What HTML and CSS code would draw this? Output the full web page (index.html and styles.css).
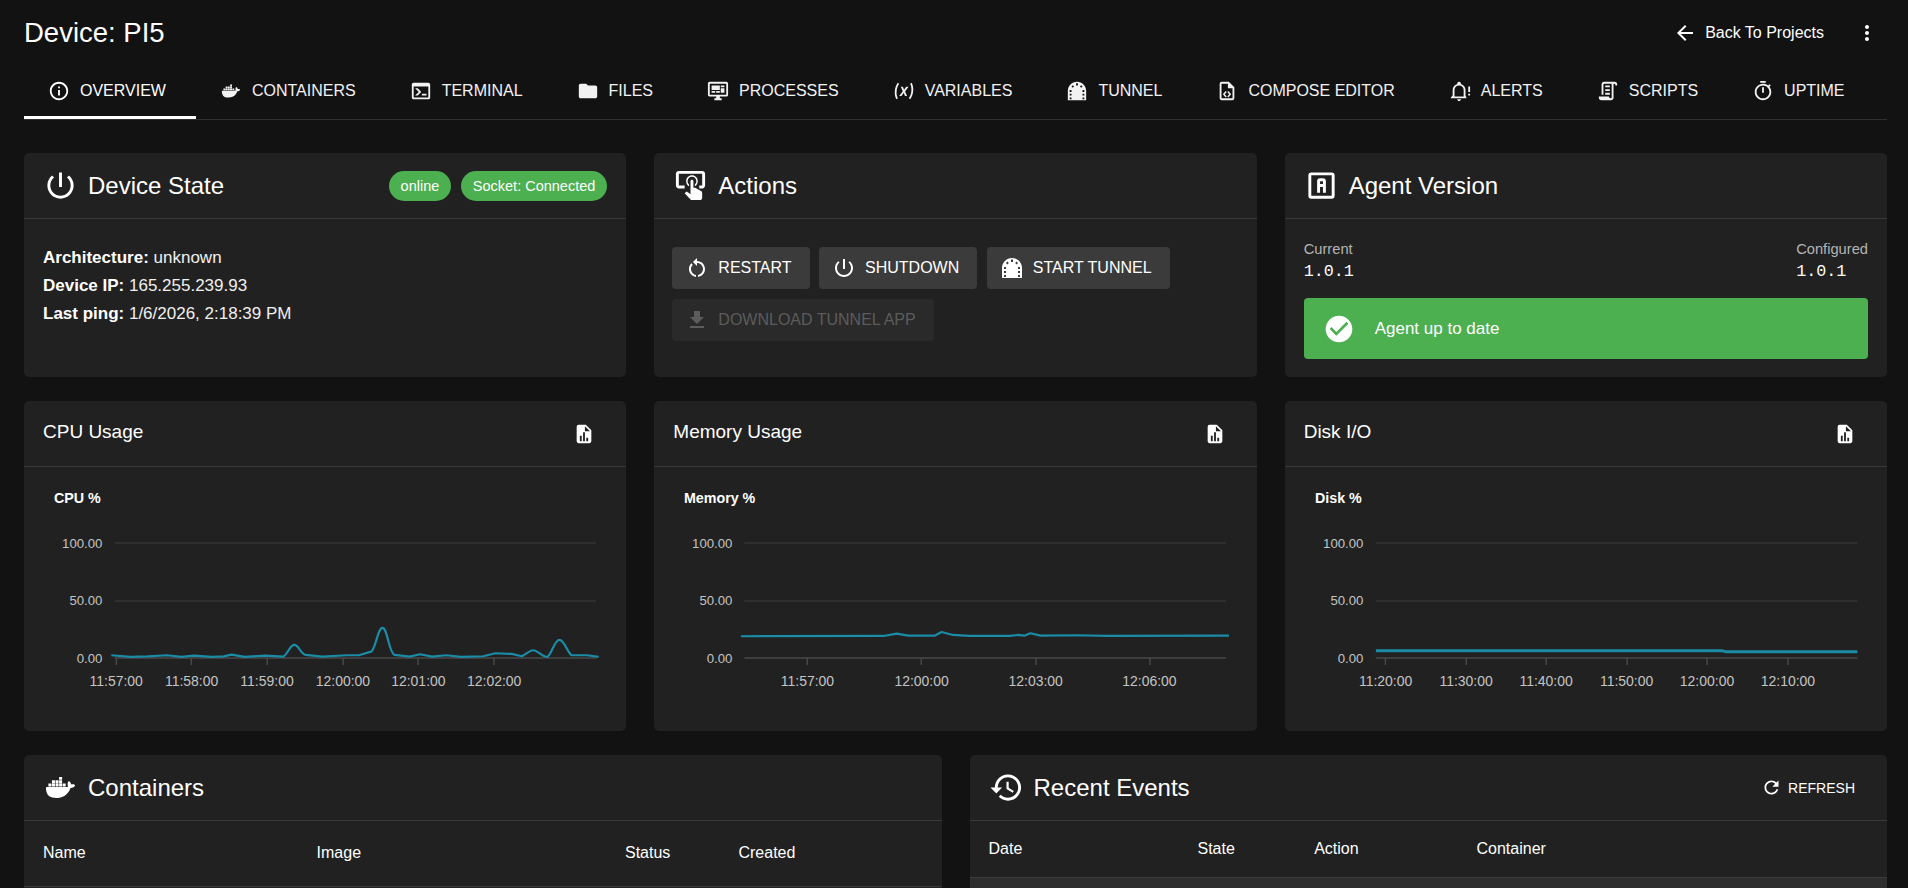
FILE: index.html
```html
<!DOCTYPE html>
<html lang="en">

<head>
    <meta charset="UTF-8">
    <title>Device: PI5</title>
    <link rel="stylesheet" href="styles.css">
</head>

<body>
    <svg class="icon-defs" xmlns="http://www.w3.org/2000/svg">
        <symbol id="i-info" viewBox="0 0 24 24"><path d="M11 7h2v2h-2zm0 4h2v6h-2zm1-9C6.48 2 2 6.48 2 12s4.48 10 10 10 10-4.48 10-10S17.52 2 12 2zm0 18c-4.41 0-8-3.59-8-8s3.59-8 8-8 8 3.59 8 8-3.59 8-8 8z"/></symbol>
        <symbol id="i-docker" viewBox="0 0 24 24"><path d="M21.81 10.25c-.06-.04-.56-.43-1.64-.43-.28 0-.56.03-.84.08-.21-1.4-1.38-2.11-1.43-2.14l-.29-.17-.18.27c-.24.36-.43.77-.51 1.19-.2.8-.08 1.56.33 2.21-.49.28-1.29.35-1.46.35H2.62c-.34 0-.62.28-.62.63 0 1.15.18 2.3.58 3.38.45 1.19 1.13 2.07 2 2.61.98.6 2.59.94 4.42.94.79 0 1.61-.07 2.42-.22 1.12-.2 2.2-.59 3.19-1.16A8.3 8.3 0 0016.76 16c1.05-1.17 1.67-2.5 2.12-3.65h.19c1.14 0 1.85-.46 2.24-.85.26-.24.45-.53.59-.87l.08-.24-.17-.14m-17.96.99h1.76c.08 0 .16-.07.16-.16V9.5c0-.08-.07-.16-.16-.16H3.85c-.09 0-.16.07-.16.16v1.58c.01.09.07.16.16.16m2.43 0h1.76c.08 0 .16-.07.16-.16V9.5c0-.08-.07-.16-.16-.16H6.28c-.09 0-.16.07-.16.16v1.58c.01.09.07.16.16.16m2.47 0h1.75c.1 0 .17-.07.17-.16V9.5c0-.08-.06-.16-.17-.16H8.75c-.08 0-.15.07-.15.16v1.58c0 .09.06.16.15.16m2.44 0h1.77c.08 0 .15-.07.15-.16V9.5c0-.08-.06-.16-.15-.16h-1.77c-.08 0-.15.07-.15.16v1.58c0 .09.07.16.15.16M6.28 9h1.76c.08 0 .16-.09.16-.18V7.25c0-.09-.07-.16-.16-.16H6.28c-.09 0-.16.06-.16.16v1.57c.01.09.07.18.16.18m2.47 0h1.75c.1 0 .17-.09.17-.18V7.25c0-.09-.06-.16-.17-.16H8.75c-.08 0-.15.06-.15.16v1.57c0 .09.06.18.15.18m2.44 0h1.77c.08 0 .15-.09.15-.18V7.25c0-.09-.07-.16-.15-.16h-1.77c-.08 0-.15.06-.15.16v1.57c0 .09.07.18.15.18m0-2.28h1.77c.08 0 .15-.07.15-.16V5c0-.1-.07-.17-.15-.17h-1.77c-.08 0-.15.06-.15.17v1.56c0 .08.07.16.15.16m2.46 4.52h1.76c.09 0 .16-.07.16-.16V9.5c0-.08-.07-.16-.16-.16h-1.76c-.08 0-.15.07-.15.16v1.58c0 .09.07.16.15.16"/></symbol>
        <symbol id="i-terminal" viewBox="0 0 24 24"><path d="M20,19V7H4V19H20M20,3A2,2 0 0,1 22,5V19A2,2 0 0,1 20,21H4A2,2 0 0,1 2,19V5C2,3.89 2.9,3 4,3H20M13,17V15H18V17H13M9.58,13L5.57,9H8.4L11.7,12.3C12.09,12.69 12.09,13.33 11.7,13.72L8.42,17H5.59L9.58,13Z"/></symbol>
        <symbol id="i-folder" viewBox="0 0 24 24"><path d="M10 4H4c-1.1 0-1.99.9-1.99 2L2 18c0 1.1.9 2 2 2h16c1.1 0 2-.9 2-2V8c0-1.1-.9-2-2-2h-8l-2-2z"/></symbol>
        <symbol id="i-monitor" viewBox="0 0 24 24"><path d="M21,16V4H3V16H21M21,2A2,2 0 0,1 23,4V16A2,2 0 0,1 21,18H14V20H16V22H8V20H10V18H3C1.89,18 1,17.1 1,16V4C1,2.89 1.89,2 3,2H21M5,6H14V11H5V6M15,6H19V8H15V6M19,9V14H15V9H19M5,12H9V14H5V12M10,12H14V14H10V12Z"/></symbol>
        <symbol id="i-variable" viewBox="0 0 24 24"><path d="M20.41,3C21.8,5.71 22.35,8.84 22,12C21.8,15.16 20.7,18.29 18.83,21L17.3,20C18.91,17.57 19.85,14.8 20,12C20.34,9.2 19.89,6.43 18.7,4L20.41,3M5.17,3L6.7,4C5.09,6.43 4.15,9.2 4,12C3.66,14.8 4.12,17.57 5.3,20L3.61,21C2.21,18.29 1.65,15.17 2,12C2.2,8.84 3.3,5.71 5.17,3M12.08,10.68L14.4,7.45H16.93L13.15,12.45L15.35,17.37H13.09L11.71,14L9.28,17.33H6.76L10.66,12.21L8.53,7.45H10.8L12.08,10.68Z"/></symbol>
        <symbol id="i-tunnel" viewBox="0 0 24 24"><path fill-rule="evenodd" d="M12 2C6.5 2 2 6.5 2 12v10h20V12C22 6.5 17.5 2 12 2zM4 11h2v2H4zM4 15h2v2H4zM4 19h2v2H4zM18 11h2v2h-2zM18 15h2v2h-2zM18 19h2v2h-2zM7.4 5.6l1.4 1.4-1.4 1.4L6 7zM16.6 5.6L18 7l-1.4 1.4L15.200 7zM11 3.500h2V6h-2z"/></symbol>
        <symbol id="i-file-code" viewBox="0 0 24 24"><path d="M14 2H6a2 2 0 00-2 2v16a2 2 0 002 2h12a2 2 0 002-2V8l-6-6zm4 18H6V4h7v5h5v11zM10.500 12l-3 3.500 3 3.500 1.200-1-2.100-2.500 2.100-2.500zm3 0l-1.200 1 2.100 2.500-2.100 2.500 1.200 1 3-3.500z"/></symbol>
        <symbol id="i-bell" viewBox="0 0 24 24"><path d="M9 21h4c0 1.100-.9 2-2 2s-2-.9-2-2zM19 19v1H2v-1l2-2v-6c0-3.100 2-5.800 5-6.700V4c0-1.100.9-2 2-2s2 .9 2 2v.3c3 .9 5 3.600 5 6.700v6l1 2zM16 11c0-2.800-2.200-5-5-5s-5 2.200-5 5v7h10v-7zM21 7h2v6h-2zM21 15h2v2h-2z"/></symbol>
        <symbol id="i-script" viewBox="0 0 24 24"><path d="M15,20A1,1 0 0,0 16,19V4H8A1,1 0 0,0 7,5V16H5V5A3,3 0 0,1 8,2H19A3,3 0 0,1 22,5V6H20V5A1,1 0 0,0 19,4A1,1 0 0,0 18,5V9L18,19A3,3 0 0,1 15,22H5A3,3 0 0,1 2,19V18H13A2,2 0 0,0 15,20M9,6H14V8H9V6M9,10H14V12H9V10M9,14H14V16H9V14Z"/></symbol>
        <symbol id="i-timer" viewBox="0 0 24 24"><path d="M15 1H9v2h6V1zm-4 13h2V8h-2v6zm8.030-6.610l1.420-1.420c-.43-.51-.9-.99-1.410-1.410l-1.420 1.420C16.070 4.740 14.120 4 12 4c-4.970 0-9 4.030-9 9s4.020 9 9 9 9-4.030 9-9c0-2.120-.74-4.070-1.970-5.610zM12 20c-3.870 0-7-3.130-7-7s3.130-7 7-7 7 3.130 7 7-3.130 7-7 7z"/></symbol>
        <symbol id="i-back" viewBox="0 0 24 24"><path d="M20 11H7.830l5.590-5.590L12 4l-8 8 8 8 1.410-1.410L7.830 13H20v-2z"/></symbol>
        <symbol id="i-more" viewBox="0 0 24 24"><path d="M12 8c1.100 0 2-.9 2-2s-.9-2-2-2-2 .9-2 2 .9 2 2 2zm0 2c-1.100 0-2 .9-2 2s.9 2 2 2 2-.9 2-2-.9-2-2-2zm0 6c-1.100 0-2 .9-2 2s.9 2 2 2 2-.9 2-2-.9-2-2-2z"/></symbol>
        <symbol id="i-power" viewBox="0 0 24 24"><path d="M13 3h-2v10h2V3zm4.830 2.170l-1.420 1.420C17.990 7.860 19 9.810 19 12c0 3.870-3.130 7-7 7s-7-3.130-7-7c0-2.190 1.010-4.140 2.580-5.420L6.170 5.170C4.230 6.820 3 9.260 3 12c0 4.970 4.030 9 9 9s9-4.030 9-9c0-2.740-1.230-5.180-3.170-6.830z"/></symbol>
        <symbol id="i-tap" viewBox="0 0 24 24"><path d="M13 5C15.210 5 17 6.790 17 9C17 10.500 16.200 11.770 15 12.460V11.240C15.610 10.690 16 9.890 16 9C16 7.340 14.660 6 13 6S10 7.340 10 9C10 9.890 10.390 10.690 11 11.240V12.460C9.800 11.770 9 10.500 9 9C9 6.790 10.790 5 13 5M20 20.500C19.970 21.320 19.320 21.970 18.500 22H13C12.620 22 12.260 21.850 12 21.570L8 17.370L8.740 16.600C8.930 16.390 9.200 16.280 9.500 16.280H9.700L12 18V9C12 8.450 12.450 8 13 8S14 8.450 14 9V13.470L15.210 13.600L19.150 15.790C19.680 16.030 20 16.560 20 17.140V20.500M20 2H4C2.900 2 2 2.900 2 4V12C2 13.110 2.900 14 4 14H8V12L4 12L4 4H20L20 12H18V14H20V13.960L20.040 14C21.130 14 22 13.090 22 12V4C22 2.900 21.110 2 20 2Z"/></symbol>
        <symbol id="i-alpha" viewBox="0 0 24 24"><path d="M11,7A2,2 0 0,0 9,9V17H11V13H13V17H15V9A2,2 0 0,0 13,7H11M11,9H13V11H11V9M5,3H19A2,2 0 0,1 21,5V19A2,2 0 0,1 19,21H5A2,2 0 0,1 3,19V5A2,2 0 0,1 5,3M5,5V19H19V5H5Z"/></symbol>
        <symbol id="i-restart" viewBox="0 0 24 24"><path d="M12 5V2L8 6l4 4V7c3.310 0 6 2.690 6 6 0 2.970-2.170 5.430-5 5.910v2.020c3.950-.49 7-3.850 7-7.930 0-4.420-3.580-8-8-8zm-6 8c0-1.650.67-3.150 1.760-4.240L6.340 7.340C4.900 8.790 4 10.790 4 13c0 4.080 3.050 7.440 7 7.930v-2.020c-2.830-.48-5-2.940-5-5.910z"/></symbol>
        <symbol id="i-download" viewBox="0 0 24 24"><path d="M19 9h-4V3H9v6H5l7 7 7-7zM5 18v2h14v-2H5z"/></symbol>
        <symbol id="i-check" viewBox="0 0 24 24"><path d="M12 2C6.480 2 2 6.480 2 12s4.480 10 10 10 10-4.480 10-10S17.520 2 12 2zm-2 15l-5-5 1.410-1.410L10 14.170l7.590-7.590L19 8l-9 9z"/></symbol>
        <symbol id="i-file-chart" viewBox="0 0 24 24"><path fill-rule="evenodd" d="M14 2H6a2 2 0 00-2 2v16a2 2 0 002 2h12a2 2 0 002-2V8l-6-6zM7.500 14h2v6h-2zM11 10h2v10h-2zM14.500 16h2v4h-2zM13 3.500L18.500 9H13z"/></symbol>
        <symbol id="i-history" viewBox="0 0 24 24"><path d="M13 3c-4.970 0-9 4.030-9 9H1l3.890 3.890.07.14L9 12H6c0-3.870 3.130-7 7-7s7 3.130 7 7-3.130 7-7 7c-1.930 0-3.680-.79-4.940-2.060l-1.420 1.420C8.270 19.990 10.510 21 13 21c4.970 0 9-4.030 9-9s-4.030-9-9-9zm-1 5v5l4.280 2.540.72-1.210-3.500-2.080V8H12z"/></symbol>
        <symbol id="i-refresh" viewBox="0 0 24 24"><path d="M17.650 6.350C16.200 4.900 14.210 4 12 4c-4.420 0-7.990 3.580-7.990 8s3.570 8 7.990 8c3.730 0 6.840-2.550 7.730-6h-2.080c-.82 2.330-3.040 4-5.650 4-3.310 0-6-2.690-6-6s2.690-6 6-6c1.660 0 3.140.69 4.220 1.780L13 11h7V4l-2.350 2.350z"/></symbol>
    </svg>

    <header class="topbar">
        <h1 class="page-title">Device: PI5</h1>
        <div class="top-actions">
            <a class="back-link"><svg class="icon-btn"><use href="#i-back"/></svg>Back To Projects</a>
            <svg class="icon-btn more"><use href="#i-more"/></svg>
        </div>
    </header>

    <nav class="tabs">
        <a class="tab active"><svg class="icon-tab"><use href="#i-info"/></svg>OVERVIEW</a>
        <a class="tab"><svg class="icon-tab"><use href="#i-docker"/></svg>CONTAINERS</a>
        <a class="tab"><svg class="icon-tab"><use href="#i-terminal"/></svg>TERMINAL</a>
        <a class="tab"><svg class="icon-tab"><use href="#i-folder"/></svg>FILES</a>
        <a class="tab"><svg class="icon-tab"><use href="#i-monitor"/></svg>PROCESSES</a>
        <a class="tab"><svg class="icon-tab"><use href="#i-variable"/></svg>VARIABLES</a>
        <a class="tab"><svg class="icon-tab"><use href="#i-tunnel"/></svg>TUNNEL</a>
        <a class="tab"><svg class="icon-tab"><use href="#i-file-code"/></svg>COMPOSE EDITOR</a>
        <a class="tab"><svg class="icon-tab"><use href="#i-bell"/></svg>ALERTS</a>
        <a class="tab"><svg class="icon-tab"><use href="#i-script"/></svg>SCRIPTS</a>
        <a class="tab"><svg class="icon-tab"><use href="#i-timer"/></svg>UPTIME</a>
    </nav>

    <main class="content">
        <div class="row-three row-status">
            <section class="card">
                <div class="card-head">
                    <svg class="icon-title"><use href="#i-power"/></svg>
                    <h2 class="card-title">Device State</h2>
                    <div class="chips">
                        <span class="chip">online</span>
                        <span class="chip">Socket: Connected</span>
                    </div>
                </div>
                <div class="state-body">
                    <p><b>Architecture:</b> unknown</p>
                    <p><b>Device IP:</b> 165.255.239.93</p>
                    <p><b>Last ping:</b> 1/6/2026, 2:18:39 PM</p>
                </div>
            </section>

            <section class="card">
                <div class="card-head">
                    <svg class="icon-title"><use href="#i-tap"/></svg>
                    <h2 class="card-title">Actions</h2>
                </div>
                <div class="actions-body">
                    <button class="btn"><svg class="icon-btn"><use href="#i-restart"/></svg>RESTART</button>
                    <button class="btn"><svg class="icon-btn"><use href="#i-power"/></svg>SHUTDOWN</button>
                    <button class="btn"><svg class="icon-btn"><use href="#i-tunnel"/></svg>START TUNNEL</button>
                    <button class="btn" disabled><svg class="icon-btn"><use href="#i-download"/></svg>DOWNLOAD TUNNEL APP</button>
                </div>
            </section>

            <section class="card">
                <div class="card-head">
                    <svg class="icon-title"><use href="#i-alpha"/></svg>
                    <h2 class="card-title">Agent Version</h2>
                </div>
                <div class="agent-body">
                    <div class="versions">
                        <div>
                            <div class="version-label">Current</div>
                            <div class="version-value">1.0.1</div>
                        </div>
                        <div>
                            <div class="version-label">Configured</div>
                            <div class="version-value">1.0.1</div>
                        </div>
                    </div>
                    <div class="alert-ok"><svg class="icon-alert"><use href="#i-check"/></svg>Agent up to date</div>
                </div>
            </section>
        </div>

        <div class="row-three row-charts">
            <section class="card">
                <div class="card-head chart-head">
                    <h2 class="chart-title">CPU Usage</h2>
                    <svg class="icon-file"><use href="#i-file-chart"/></svg>
                </div>
                <svg class="chart" viewBox="0 0 603 264">
                    <text class="chart-name" x="30" y="36">CPU %</text>
                    <line class="grid" x1="90.500" y1="76" x2="572.500" y2="76"/>
                    <line class="grid" x1="90.500" y1="134" x2="572.500" y2="134"/>
                    <line class="axis" x1="90.500" y1="191" x2="572.500" y2="191"/>
                    <text class="y-label" x="78.500" y="81">100.00</text>
                    <text class="y-label" x="78.500" y="138">50.00</text>
                    <text class="y-label" x="78.500" y="196">0.00</text>
                    <path class="axis" d="M92.500 191v7M167.500 191v7M243.500 191v7M319.500 191v7M394.500 191v7M470.500 191v7"/>
                    <text class="x-label" x="92.300" y="219">11:57:00</text>
                    <text class="x-label" x="167.800" y="219">11:58:00</text>
                    <text class="x-label" x="243.300" y="219">11:59:00</text>
                    <text class="x-label" x="319.300" y="219">12:00:00</text>
                    <text class="x-label" x="394.800" y="219">12:01:00</text>
                    <text class="x-label" x="470.700" y="219">12:02:00</text>
                    <path class="series" d="M87.400 188.300L106.600 190L124 189.500L143.300 188.300L157.600 190L169.900 188.700L188.200 190L200 189.500L207.800 187.700L220.900 190L241.300 188.700L259.700 189.700C265 186 266 178 270.700 178C275 178 277 187 282.100 188L298.400 189.700L323 188.300L335.200 188.300L347.400 184.700C352 183 354 161 358.900 161C364 161 365 186 371.100 188L386.200 189.700L396.400 187.300L408.700 189.700L422.900 188.300L437.200 190L459.700 189.300L471.900 186.300L488.200 187L498.400 189.300C503 187 506 183.300 509.900 183.300C514 183.300 519 190 523.800 190C528 188 531 173 536 173C541 173 544 186 548.200 188.300L563.800 188.300L575.200 190"/>
                </svg>
            </section>

            <section class="card">
                <div class="card-head chart-head">
                    <h2 class="chart-title">Memory Usage</h2>
                    <svg class="icon-file"><use href="#i-file-chart"/></svg>
                </div>
                <svg class="chart" viewBox="0 0 603 264">
                    <text class="chart-name" x="30" y="36">Memory %</text>
                    <line class="grid" x1="90.500" y1="76" x2="572.500" y2="76"/>
                    <line class="grid" x1="90.500" y1="134" x2="572.500" y2="134"/>
                    <line class="axis" x1="90.500" y1="191" x2="572.500" y2="191"/>
                    <text class="y-label" x="78.500" y="81">100.00</text>
                    <text class="y-label" x="78.500" y="138">50.00</text>
                    <text class="y-label" x="78.500" y="196">0.00</text>
                    <path class="axis" d="M153.500 191v7M267.500 191v7M382.500 191v7M496.500 191v7"/>
                    <text class="x-label" x="153.600" y="219">11:57:00</text>
                    <text class="x-label" x="267.900" y="219">12:00:00</text>
                    <text class="x-label" x="382.100" y="219">12:03:00</text>
                    <text class="x-label" x="496" y="219">12:06:00</text>
                    <path class="series" d="M87 169.300L229.900 169L243 166.700L254.400 168.700L280.900 168.700L287.900 165L299.300 168L315.600 169L356.400 169L364.600 168L370.700 168.700L376.800 166.300L387 168.700L421.700 168.300L454.500 169L575.600 168.700"/>
                </svg>
            </section>

            <section class="card">
                <div class="card-head chart-head">
                    <h2 class="chart-title">Disk I/O</h2>
                    <svg class="icon-file"><use href="#i-file-chart"/></svg>
                </div>
                <svg class="chart" viewBox="0 0 603 264">
                    <text class="chart-name" x="30" y="36">Disk %</text>
                    <line class="grid" x1="91" y1="76" x2="573" y2="76"/>
                    <line class="grid" x1="91" y1="134" x2="573" y2="134"/>
                    <line class="axis" x1="91" y1="191" x2="573" y2="191"/>
                    <text class="y-label" x="78.500" y="81">100.00</text>
                    <text class="y-label" x="78.500" y="138">50.00</text>
                    <text class="y-label" x="78.500" y="196">0.00</text>
                    <path class="axis" d="M100.500 191v7M181.500 191v7M261.500 191v7M342.500 191v7M422.500 191v7M503.500 191v7"/>
                    <text class="x-label" x="100.700" y="219">11:20:00</text>
                    <text class="x-label" x="181.300" y="219">11:30:00</text>
                    <text class="x-label" x="261.400" y="219">11:40:00</text>
                    <text class="x-label" x="342" y="219">11:50:00</text>
                    <text class="x-label" x="422.500" y="219">12:00:00</text>
                    <text class="x-label" x="503.500" y="219">12:10:00</text>
                    <path class="series series-flat" d="M91 183.700L437 183.700L441 184.700L573 184.700"/>
                </svg>
            </section>
        </div>

        <div class="row-two">
            <section class="card">
                <div class="card-head">
                    <svg class="icon-title"><use href="#i-docker"/></svg>
                    <h2 class="card-title">Containers</h2>
                </div>
                <table class="data-table containers-table">
                    <thead>
                        <tr>
                            <th class="c-name">Name</th>
                            <th class="c-image">Image</th>
                            <th class="c-status">Status</th>
                            <th>Created</th>
                        </tr>
                    </thead>
                </table>
            </section>

            <section class="card">
                <div class="card-head">
                    <svg class="icon-title"><use href="#i-history"/></svg>
                    <h2 class="card-title">Recent Events</h2>
                    <button class="refresh"><svg class="icon-refresh"><use href="#i-refresh"/></svg>REFRESH</button>
                </div>
                <table class="data-table events-table">
                    <thead>
                        <tr>
                            <th class="e-date">Date</th>
                            <th class="e-state">State</th>
                            <th class="e-action">Action</th>
                            <th>Container</th>
                        </tr>
                    </thead>
                    <tbody>
                        <tr class="event-row"><td colspan="4"></td></tr>
                    </tbody>
                </table>
            </section>
        </div>
    </main>
</body>

</html>
```

FILE: styles.css
```css
* {
    box-sizing: border-box;
}

html,
body {
    height: 100%;
    overflow: hidden;
}

body {
    margin: 0;
    padding: 0 21px 0 24px;
    background-color: #121212;
    color: #fff;
    font-family: "Liberation Sans", Arial, sans-serif;
    font-size: 17px;
}

svg {
    fill: currentColor;
    flex-shrink: 0;
}

.icon-defs {
    display: none;
}

.topbar {
    height: 66px;
    display: flex;
    align-items: center;
    justify-content: space-between;
}

.page-title {
    margin: 0;
    font-size: 27.500px;
    font-weight: 400;
}

.top-actions {
    display: flex;
    align-items: center;
    gap: 31px;
    padding-right: 8px;
}

.back-link {
    display: flex;
    align-items: center;
    gap: 8px;
    font-size: 16px;
}

.tabs {
    height: 54px;
    display: flex;
    border-bottom: 1px solid #303030;
}

.tab {
    height: 53px;
    display: flex;
    align-items: center;
    gap: 10px;
    padding: 0 30px 0 24px;
    font-size: 16px;
    border-bottom: 3px solid transparent;
    color: #f2f2f2;
}

.tab.active {
    border-bottom-color: #fff;
    color: #fff;
}

.icon-tab {
    width: 22px;
    height: 22px;
}

.icon-btn {
    width: 24px;
    height: 24px;
}

.icon-title {
    width: 35px;
    height: 35px;
}

.content {
    margin-top: 33px;
    display: flex;
    flex-direction: column;
    gap: 24px;
}

.row-three {
    display: grid;
    grid-template-columns: repeat(3, 1fr);
    gap: 28px;
}

.row-status {
    height: 224px;
}

.row-charts {
    height: 330px;
}

.row-two {
    display: grid;
    grid-template-columns: 1fr 1fr;
    gap: 28px;
}

.card {
    background-color: #212121;
    border-radius: 5px;
}

.card-head {
    height: 66px;
    display: flex;
    align-items: center;
    gap: 10px;
    padding: 0 19px;
    border-bottom: 1px solid #3a3a3a;
}

.card-title {
    margin: 0;
    font-size: 24px;
    font-weight: 400;
}

.chips {
    margin-left: auto;
    display: flex;
    gap: 9.500px;
}

.chip {
    height: 30px;
    padding: 0 12px;
    display: flex;
    align-items: center;
    border-radius: 15px;
    background-color: #4caf50;
    font-size: 14.500px;
}

.state-body {
    padding: 25px 19px 0;
    line-height: 28px;
    color: #f0f0f0;
}

.state-body p {
    margin: 0;
}

.state-body b {
    color: #fff;
}

.actions-body {
    padding: 28px 18px 0;
    display: flex;
    flex-wrap: wrap;
    gap: 10px 9.500px;
}

.btn {
    height: 42px;
    padding: 0 18px 0 13px;
    display: flex;
    align-items: center;
    gap: 9px;
    border: none;
    border-radius: 4px;
    background-color: #3b3b3b;
    color: #fff;
    font-family: inherit;
    font-size: 16px;
}

.btn:disabled {
    background-color: #2a2a2a;
    color: #5c5c5c;
}

.agent-body {
    padding: 20px 19px 0;
}

.versions {
    display: flex;
    justify-content: space-between;
}

.version-label {
    line-height: 20px;
    font-size: 14.700px;
    color: #b4b4b4;
}

.version-value {
    line-height: 26px;
    font-family: "Liberation Mono", monospace;
    font-size: 16.700px;
}

.alert-ok {
    margin-top: 13px;
    height: 61px;
    display: flex;
    align-items: center;
    gap: 20px;
    padding-left: 19px;
    border-radius: 4px;
    background-color: #4caf50;
}

.icon-alert {
    width: 32px;
    height: 32px;
}

.chart-head {
    justify-content: space-between;
    padding-right: 31px;
}

.chart-title {
    margin: 0 0 4px;
    font-size: 19px;
    font-weight: 400;
}

.icon-file {
    width: 22px;
    height: 22px;
}

.chart {
    display: block;
    width: 100%;
    height: 264px;
}

.chart text {
    font-family: "Liberation Sans", Arial, sans-serif;
}

.chart-name {
    font-size: 14.300px;
    font-weight: 700;
    fill: #fff;
}

.y-label {
    font-size: 13.200px;
    text-anchor: end;
    fill: #c4c4c4;
}

.x-label {
    font-size: 14px;
    text-anchor: middle;
    fill: #c4c4c4;
}

.grid {
    stroke: #343434;
    stroke-width: 1.500;
}

.axis {
    stroke: #484848;
    stroke-width: 1.500;
    fill: none;
}

.series {
    fill: none;
    stroke: #1a8ca6;
    stroke-width: 2.200;
    stroke-linejoin: round;
}

.series-flat {
    stroke-width: 3;
}

.refresh {
    margin-left: auto;
    padding: 0 13px 0 0;
    display: flex;
    align-items: center;
    gap: 6px;
    border: none;
    background: none;
    color: #fff;
    font-family: inherit;
    font-size: 14px;
}

.icon-refresh {
    width: 21px;
    height: 21px;
}

.data-table {
    width: 100%;
    table-layout: fixed;
    border-collapse: collapse;
}

.data-table th {
    text-align: left;
    font-size: 16px;
    font-weight: 400;
    padding: 0 0 0 19px;
    border-bottom: 1px solid #3a3a3a;
}

.containers-table th {
    height: 65px;
}

.events-table th {
    height: 56px;
}

.c-name {
    width: 273.600px;
}

.c-image {
    width: 308.400px;
}

.c-status {
    width: 113.500px;
}

.e-date {
    width: 209px;
}

.e-state {
    width: 116.700px;
}

.e-action {
    width: 162.300px;
}

.event-row td {
    height: 50px;
    background-color: #2e2e2e;
}
```
